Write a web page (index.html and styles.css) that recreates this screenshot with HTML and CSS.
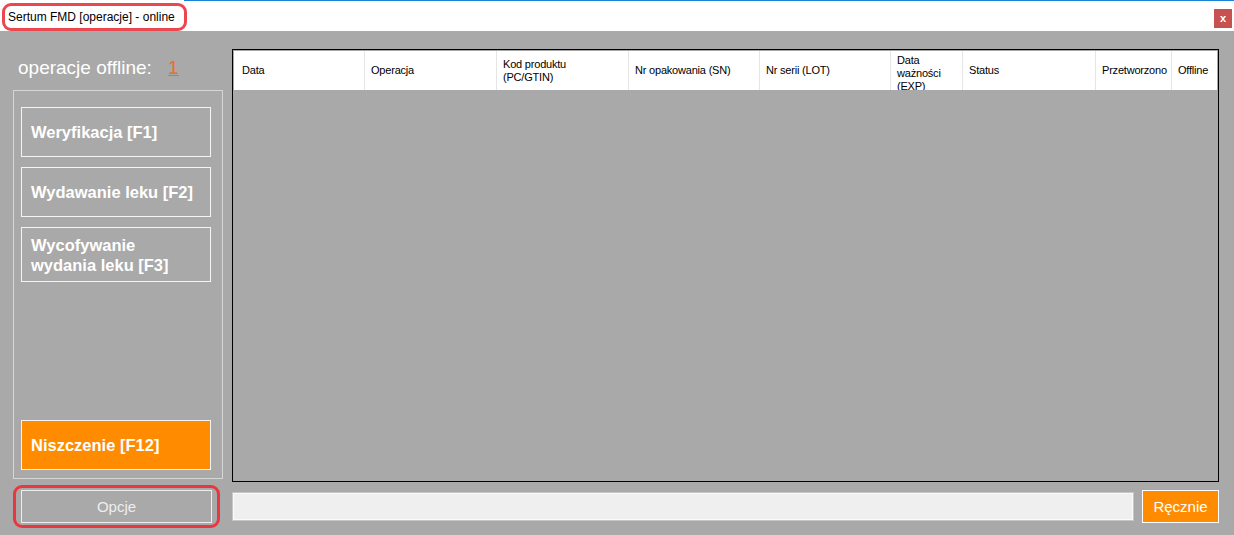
FILE: index.html
```html
<!DOCTYPE html>
<html lang="pl">
<head>
  <meta charset="UTF-8">
  <title>Sertum FMD [operacje] - online</title>
  <link rel="stylesheet" href="styles.css">
</head>
<body>
<div class="titlebar">
  <div class="accent"></div>
  <div class="title-row">
    <div class="title-mark">Sertum FMD [operacje] - online</div>
    <a href="#" class="close">x</a>
  </div>
</div>

<div class="main">
  <div class="side">
    <div class="offline">operacje offline: <a href="#" class="offline-count">1</a></div>

    <div class="group">
      <a href="#" class="op-btn">Weryfikacja [F1]</a>
      <a href="#" class="op-btn">Wydawanie leku [F2]</a>
      <a href="#" class="op-btn tall">Wycofywanie<br>wydania leku [F3]</a>
      <a href="#" class="op-btn danger">Niszczenie [F12]</a>
    </div>

    <div class="options-mark">
      <a href="#" class="options">Opcje</a>
    </div>
  </div>

  <div class="content">
    <div class="grid">
      <div class="grid-head">
        <div class="col">Data</div>
        <div class="col">Operacja</div>
        <div class="col">Kod produktu<br>(PC/GTIN)</div>
        <div class="col">Nr opakowania (SN)</div>
        <div class="col">Nr serii (LOT)</div>
        <div class="col clip">Data<br>ważności<br>(EXP)</div>
        <div class="col">Status</div>
        <div class="col">Przetworzono</div>
        <div class="col">Offline</div>
      </div>
    </div>

    <div class="bottom">
      <input type="text" class="code-input">
      <a href="#" class="manual">Ręcznie</a>
    </div>
  </div>
</div>
</body>
</html>
```

FILE: styles.css
```css
html, body {
  margin: 0;
  padding: 0;
  height: 100%;
  overflow: hidden;
  background-color: #a9a9a9;
  font-family: "Liberation Sans", Arial, sans-serif;
}

a {
  text-decoration: none;
}

/* Window title bar */
.titlebar {
  background-color: #fff;
  height: 31px;
}

.accent {
  height: 1px;
  margin-left: 184px;
  background-color: #1883d7;
}

.title-row {
  display: flex;
  align-items: flex-start;
  justify-content: space-between;
  height: 30px;
}

.title-mark {
  box-sizing: border-box;
  margin: 2px 0 0 2px;
  width: 185px;
  height: 28px;
  padding-left: 3px;
  border: 3px solid #ea4751;
  border-radius: 9px;
  font-size: 12px;
  line-height: 22px;
  color: #000;
}

.close {
  margin: 8px 2px 0 0;
  width: 18px;
  height: 19px;
  background-color: #c75050;
  color: #fff;
  font-size: 11px;
  font-weight: bold;
  line-height: 18px;
  text-align: center;
}

/* Main area */
.main {
  display: flex;
  height: 504px;
  padding: 0 15px 0 13px;
}

.side {
  width: 210px;
  display: flex;
  flex-direction: column;
}

.offline {
  box-sizing: border-box;
  height: 59px;
  padding: 27px 0 0 5px;
  font-size: 19px;
  line-height: 20px;
  color: #fff;
}

.offline-count {
  margin-left: 11px;
  color: #e8701a;
  text-decoration: underline;
}

.group {
  box-sizing: border-box;
  height: 389px;
  padding: 16px 11px 8px 7px;
  border: 1px solid #d6d6d6;
  display: flex;
  flex-direction: column;
  gap: 10px;
}

.op-btn {
  box-sizing: border-box;
  display: flex;
  align-items: center;
  height: 50px;
  padding-left: 9px;
  border: 1px solid #f4f4f4;
  color: #fff;
  font-size: 16.5px;
  font-weight: bold;
  line-height: 20px;
}

.op-btn.tall {
  height: 55px;
}

.op-btn.danger {
  margin-top: auto;
  background-color: #ff8c00;
}

.options-mark {
  box-sizing: border-box;
  width: 207px;
  height: 43px;
  margin-top: 6px;
  padding: 2px 5px;
  border: 3px solid #e8383f;
  border-radius: 9px;
}

.options {
  box-sizing: border-box;
  display: block;
  height: 33px;
  border: 1px solid #eeeeee;
  color: #eeeeee;
  font-size: 15px;
  line-height: 31px;
  text-align: center;
}

/* Operations list */
.content {
  flex: 1;
  margin-left: 9px;
  display: flex;
  flex-direction: column;
}

.grid {
  box-sizing: border-box;
  height: 433px;
  margin-top: 18px;
  padding: 1px;
  border: 1px solid #000;
}

.grid-head {
  display: grid;
  grid-template-columns: 130px 132px 132px 131px 131px 72px 133px 76px 1fr;
  height: 39px;
  background-color: #fff;
}

.col {
  display: flex;
  align-items: center;
  padding-left: 6px;
  overflow: hidden;
  border-left: 1px solid #e5e5e5;
  font-size: 11px;
  letter-spacing: -0.2px;
  line-height: 13px;
  color: #000;
  white-space: nowrap;
}

.col:first-child {
  border-left: none;
  padding-left: 8px;
}

.col.clip {
  align-items: flex-start;
  padding-top: 3px;
}

.bottom {
  display: flex;
  align-items: center;
  gap: 8px;
  height: 33px;
  margin-top: 8px;
}

.code-input {
  box-sizing: border-box;
  flex: 1;
  height: 29px;
  margin: 0;
  border: 1px solid #c6c6c6;
  box-shadow: inset 0 0 0 1px #fafafa;
  background-color: #efefef;
  outline: none;
}

.manual {
  box-sizing: border-box;
  width: 77px;
  height: 33px;
  border: 1px solid #fff;
  background-color: #ff8c00;
  color: #fff;
  font-size: 15px;
  line-height: 31px;
  text-align: center;
}
```
